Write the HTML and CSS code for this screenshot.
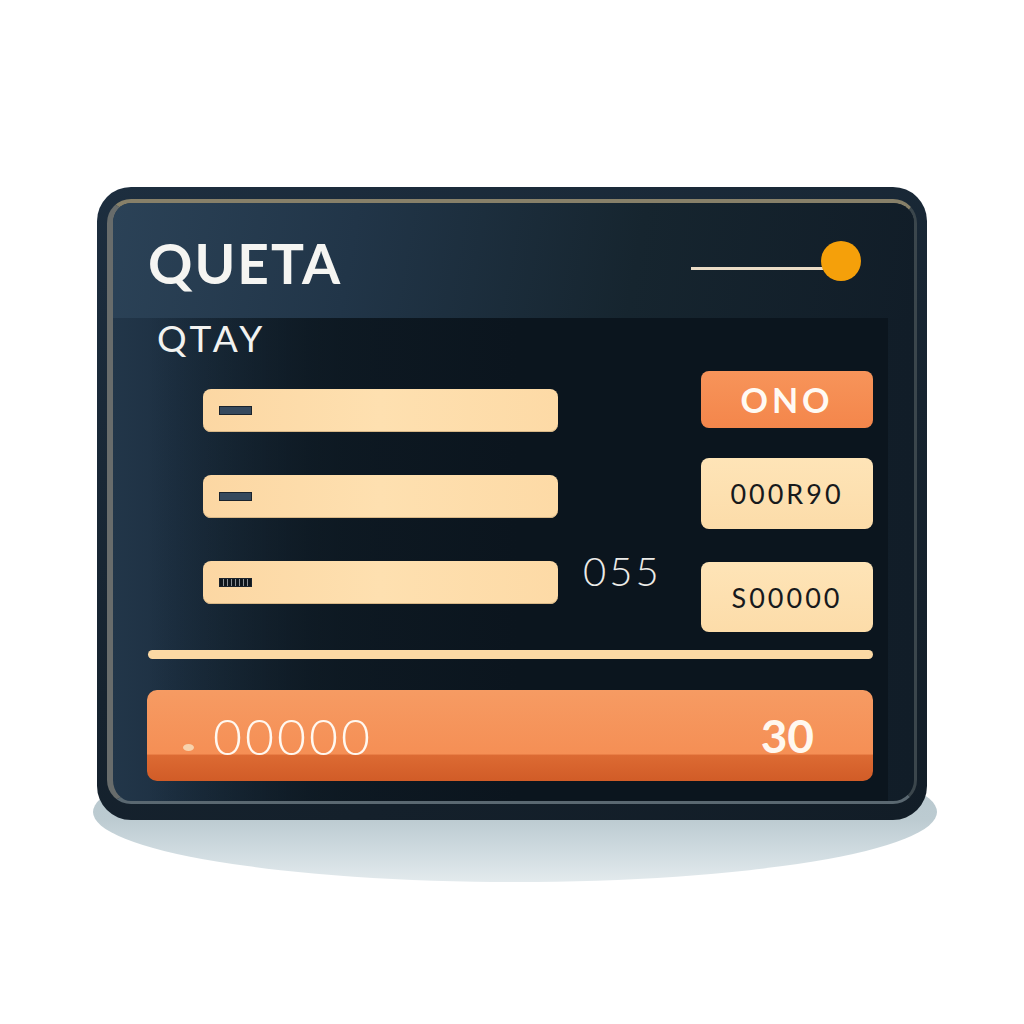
FILE: index.html
```html
<!DOCTYPE html>
<html lang="en">
<head>
  <meta charset="UTF-8">
  <meta name="viewport" content="width=device-width, initial-scale=1.0">
  <title>Queta</title>
  <link rel="stylesheet" href="styles.css">
</head>
<body>
  <div class="stage">
    <div class="device">
      <div class="screen">
        <header class="top">
          <h1 class="title">QUETA</h1>
          <div class="slider">
            <span class="track"></span>
            <span class="knob"></span>
          </div>
        </header>

        <main class="panel">
          <h2 class="subtitle">QTAY</h2>

          <div class="form-row">
            <div class="fields">
              <div class="field"><span class="mark"></span></div>
              <div class="field"><span class="mark"></span></div>
              <div class="field"><span class="mark mark-dark"></span></div>
            </div>
            <div class="count">055</div>
            <div class="actions">
              <button class="btn btn-orange">ONO</button>
              <button class="btn btn-cream btn-tall">000R90</button>
              <button class="btn btn-cream btn-tall last">S00000</button>
            </div>
          </div>

          <div class="divider"></div>

          <div class="total">
            <span class="total-dot"></span>
            <span class="total-amount">00000</span>
            <span class="total-qty">30</span>
          </div>
        </main>
      </div>
    </div>
    <!-- floor shadow, tucked under the case -->
    <div class="floor"></div>
  </div>
</body>
</html>
```

FILE: styles.css
```css
body {
  margin: 0;
  padding: 0;
  background-color: #ffffff;
  font-family: Lato, "Open Sans", sans-serif;
}

.stage {
  padding: 187px 0 142px 97px;
}

/* outer case */
.device {
  position: relative;
  z-index: 1;
  width: 830px;
  height: 633px;
  box-sizing: border-box;
  padding: 12px 10px 16px 10px;
  border-radius: 34px;
  background: linear-gradient(160deg, #1d2e3f 0%, #16232f 55%, #121d27 100%);
}

.floor {
  width: 844px;
  height: 140px;
  margin: -78px 0 0 -4px;
  border-radius: 50%;
  background: linear-gradient(180deg, #b4c4cb 0%, #bccbd1 55%, #cfdbe0 78%, #e3eaed 100%);
}

.screen {
  height: 100%;
  box-sizing: border-box;
  display: flex;
  flex-direction: column;
  border-style: solid;
  border-width: 4px 3px 3px 6px;
  border-color: #878069 #3b464c #5a6871 #686c6b;
  border-radius: 24px;
  overflow: hidden;
  background: linear-gradient(90deg, #223649 0%, #1d3042 8%, #15242f 30%, #111d28 100%);
}

.top {
  height: 115px;
  flex-shrink: 0;
  display: flex;
  align-items: center;
  padding: 0 53px 0 35px;
  background: linear-gradient(100deg, #2b4257 0%, #213548 30%, #16252f 65%, #111d28 100%);
}

.title {
  margin: 0;
  margin-top: 4px;
  color: #f5f5f2;
  font-size: 55px;
  font-weight: 700;
  letter-spacing: 2px;
}

.slider {
  margin-left: auto;
  display: flex;
  align-items: center;
}

.track {
  width: 132px;
  height: 3px;
  margin-top: 16px;
  background-color: #eadcc6;
}

.knob {
  width: 40px;
  height: 40px;
  margin-left: -2px;
  border-radius: 50%;
  background-color: #f5a00a;
}

.panel {
  flex: 1;
  margin: 0 26px 0 35px;
  padding: 0 15px 0 0;
  background: linear-gradient(90deg, rgba(11, 21, 30, 0) 0%, rgba(11, 21, 30, 0.7) 22%, #0b151e 50%, #0b151e 100%);
}

.subtitle {
  margin: 0 0 0 9px;
  height: 40px;
  line-height: 40px;
  color: #f2f2f0;
  font-size: 37px;
  font-weight: 400;
  letter-spacing: 4px;
}

.form-row {
  display: flex;
  margin-top: 13px;
}

.fields {
  width: 355px;
  margin-left: 55px;
  padding-top: 18px;
  display: flex;
  flex-direction: column;
  gap: 43px;
}

.field {
  height: 43px;
  box-sizing: border-box;
  display: flex;
  align-items: center;
  padding-left: 16px;
  border-radius: 8px;
  background: linear-gradient(90deg, #fcd7a3 0%, #fee0b0 50%, #fddaa6 100%);
  box-shadow: inset 0 -1px 0 #d8b787;
}

.mark {
  width: 33px;
  height: 9px;
  box-sizing: border-box;
  border: 1px solid #1a232d;
  background-color: #36495d;
}

.mark-dark {
  background: repeating-linear-gradient(90deg, #0f161d 0, #0f161d 3px, #8a8f94 3px, #8a8f94 4px);
}

.count {
  margin-left: 25px;
  padding-top: 180px;
  color: #ecebe8;
  font-size: 40px;
  font-weight: 300;
  line-height: 40px;
  letter-spacing: 3px;
}

.actions {
  margin-left: auto;
  width: 172px;
  display: flex;
  flex-direction: column;
}

.btn {
  border: none;
  border-radius: 8px;
  font-family: Lato, "Open Sans", sans-serif;
  padding: 0;
}

.btn-orange {
  height: 57px;
  background: linear-gradient(180deg, #f7945a 0%, #f4864b 100%);
  color: #fffaf4;
  font-size: 34px;
  font-weight: 700;
  letter-spacing: 4px;
}

.btn-cream {
  background: linear-gradient(180deg, #fee4b7 0%, #fcdca9 100%);
  color: #17191c;
  font-size: 27px;
  font-weight: 400;
  letter-spacing: 3px;
}

.btn-tall {
  height: 71px;
  margin-top: 30px;
}

.btn-tall.last {
  height: 70px;
  margin-top: 33px;
}

.divider {
  height: 9px;
  margin-top: 18px;
  border-radius: 5px;
  background-color: #fcd9a4;
}

.total {
  height: 91px;
  margin-top: 31px;
  margin-left: -1px;
  display: flex;
  align-items: center;
  padding: 0 59px 0 36px;
  border-radius: 10px;
  background: linear-gradient(180deg, #f69b63 0%, #f58f55 70%, #dc6a33 72%, #d15c27 100%);
  color: #fff8f0;
}

.total-dot {
  width: 11px;
  height: 7px;
  margin-top: 24px;
  margin-right: 19px;
  border-radius: 50%;
  background-color: #f7d3ad;
}

.total-amount {
  font-size: 50px;
  font-weight: 300;
  letter-spacing: 3px;
}

.total-qty {
  margin-left: auto;
  font-size: 46px;
  font-weight: 700;
}
```
